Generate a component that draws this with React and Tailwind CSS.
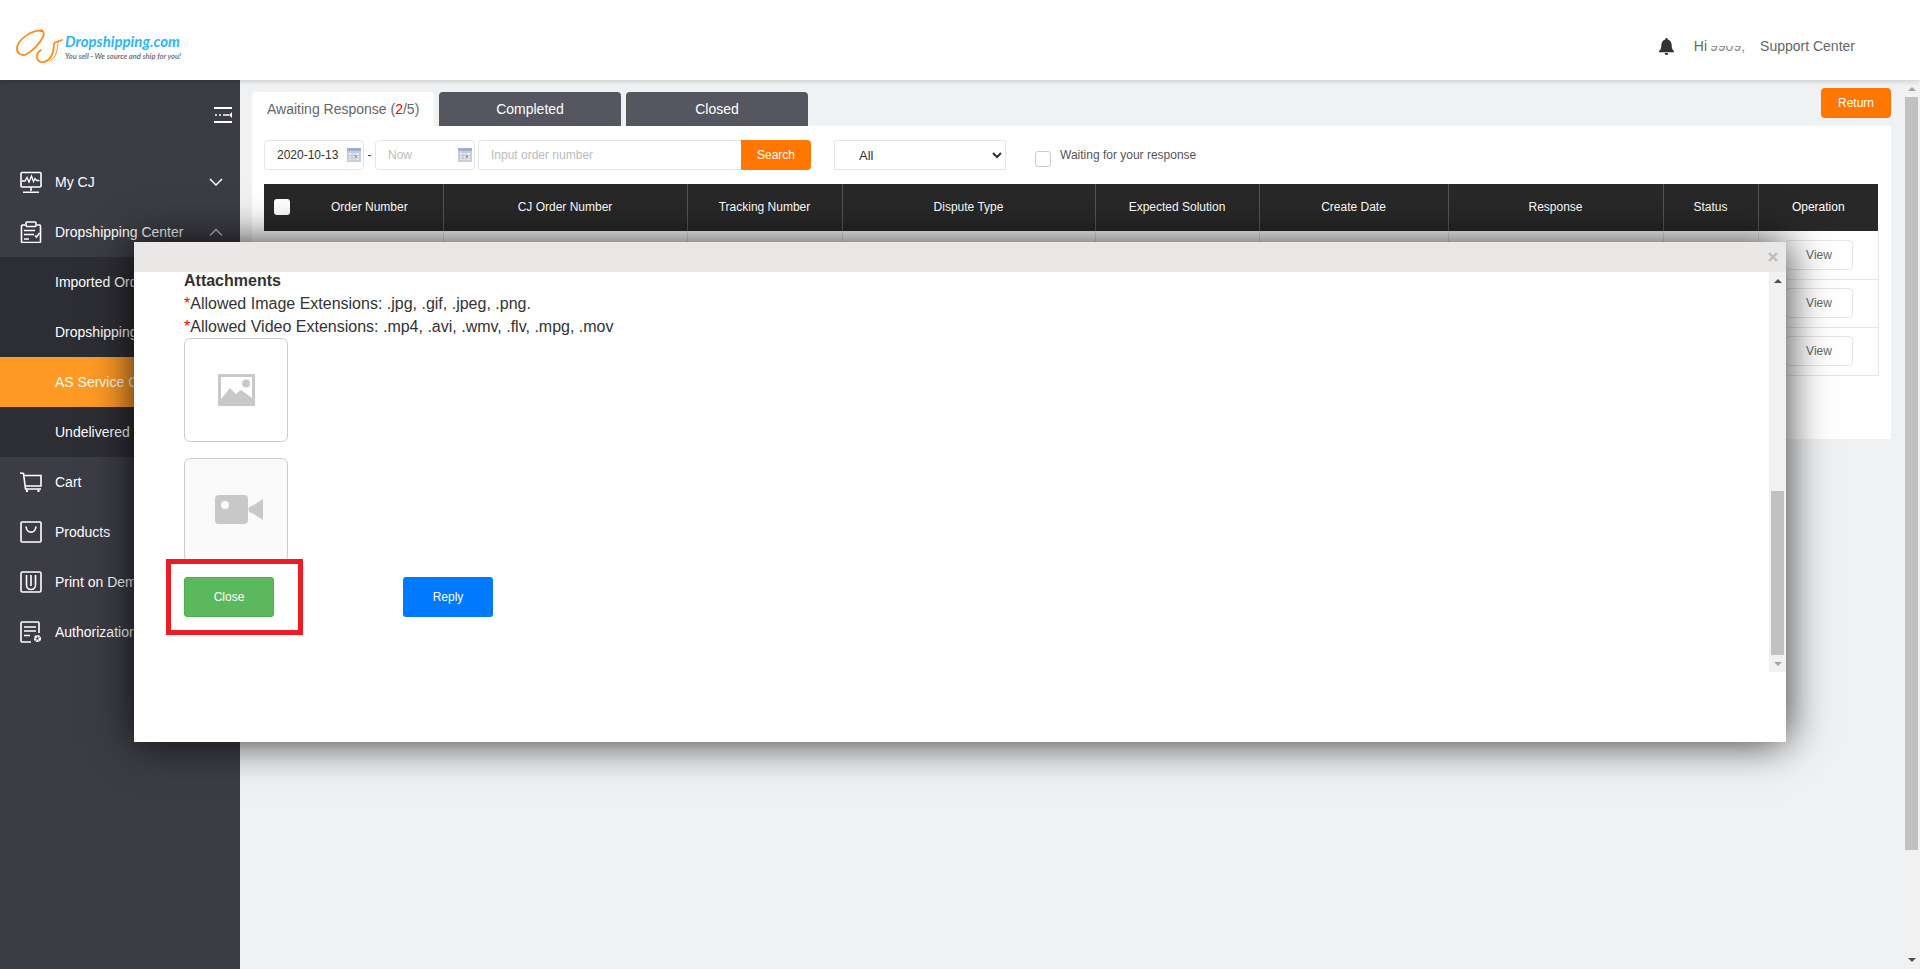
import React from "react";

const Icon = ({ children, className = "" }) => (
  <svg viewBox="0 0 22 22" fill="none" stroke="#fff" strokeWidth="1.600" className={`w-[22px] h-[22px] shrink-0 ${className}`}>
    {children}
  </svg>
);

const Chevron = ({ up }) => (
  <svg viewBox="0 0 14 8" className="w-[14px] h-2 ml-auto mr-[17px]" fill="none" stroke={up ? "#b9b9bd" : "#fff"} strokeWidth="1.500">
    <path d={up ? "M1 7.500 7 1.500l6 6" : "M1 1l6 6 6-6"} />
  </svg>
);

const MonitorI = () => (
  <Icon>
    <rect x="1" y="1.500" width="20" height="14.500" rx="1" />
    <path d="M2 10h3l2-3.500 2 4.500 2.500-6 2 5.500 1.500-3 1.500 2h3" strokeWidth="1.300" />
    <path d="M11 16v4M3 21.200h16" />
  </Icon>
);
const ClipI = () => (
  <Icon>
    <path d="M5 4H2.500a1 1 0 0 0-1 1v15.500a1 1 0 0 0 1 1h17a1 1 0 0 0 1-1V5a1 1 0 0 0-1-1H17" />
    <rect x="6" y="1" width="10" height="4.500" rx="1" />
    <path d="M4 9.500h11M4 13.500h10M4 18h5M15 14.500l1.500 1.500 3-4" />
  </Icon>
);
const CartI = () => (
  <Icon>
    <path d="M0 2l3.500.5L5.500 18H21" />
    <path d="M4 4.500h17V15H5" />
    <path d="M7 18.500v2.500M18.500 18.500v2.500" strokeWidth="2" />
  </Icon>
);
const BagI = () => (
  <Icon>
    <rect x="1" y="1" width="20" height="20" rx="1" />
    <path d="M6 5.500c1 7.500 9 7.500 10 0" />
  </Icon>
);
const PrintI = () => (
  <Icon>
    <rect x="1" y="1" width="20" height="20" rx="1.500" />
    <path d="M6.500 4v10c0 6 9 6 9 0V4M11 4v11" />
  </Icon>
);
const AuthI = () => (
  <Icon>
    <path d="M11 21H2a1 1 0 0 1-1-1V2a1 1 0 0 1 1-1h16a1 1 0 0 1 1 1v10" />
    <path d="M4 6h12M4 10h12M4 14.500h6" />
    <circle cx="17.500" cy="17.500" r="2.400" stroke="#fff" strokeWidth="2.400" strokeDasharray="2 0.500" />
  </Icon>
);

const MainItem = ({ icon, label, chevron, up }) => (
  <div className="h-[50px] flex items-center pl-5 text-white text-sm whitespace-nowrap">
    {icon}
    <span className="ml-[13px]">{label}</span>
    {chevron && <Chevron up={up} />}
  </div>
);

const SubItem = ({ label, active }) => (
  <div className={`h-[50px] flex items-center pl-[55px] text-white text-sm whitespace-nowrap ${active ? "bg-[#ff9a24]" : ""}`}>
    {label}
  </div>
);

const Calendar = () => (
  <svg viewBox="0 0 14 14" className="w-[14px] h-[14px] absolute right-[3px] top-[8px]">
    <rect x="0" y="0" width="14" height="14" fill="#c3cfe0" />
    <rect x="0" y="0" width="14" height="3" fill="#9db0cf" />
    <rect x="2" y="5" width="10" height="7" fill="#e7edf5" />
    <path d="M2 7.500h10M2 10h10M5 5v7M8 5v7" stroke="#a9b9d0" strokeWidth="0.700" />
    <rect x="8" y="7.500" width="2" height="2" fill="#d9796f" />
  </svg>
);

const Arrow = ({ down, color }) => (
  <svg viewBox="0 0 8 4" className="w-2 h-1" fill={color}>
    <path d={down ? "M0 0h8L4 4z" : "M4 0l4 4H0z"} />
  </svg>
);

const cols = [179, 244, 155, 253, 164, 189, 215, 95, 120];
const heads = ["Order Number", "CJ Order Number", "Tracking Number", "Dispute Type", "Expected Solution", "Create Date", "Response", "Status", "Operation"];

const ViewRow = () => (
  <tr className="h-12">
    {cols.map((_, i) => (
      <td key={i} className="p-0 border-b border-r border-[#e5e5e5]">
        {i === 8 && (
          <div className="flex justify-center pl-[2px]">
            <span className="w-[68px] h-[30px] flex items-center justify-center bg-white border border-[#e5e5e5] rounded text-xs text-[#666]">View</span>
          </div>
        )}
      </td>
    ))}
  </tr>
);

const Logo = () => (
  <div className="flex items-start ml-[15px] mt-[14px] relative">
    <svg viewBox="0 0 48 36" className="w-12 h-9 shrink-0" fill="none" stroke="#ff8c1a" strokeWidth="1.800" strokeLinecap="round">
      <path d="M27 2C18 0 3 10 2 19c-.5 6 5 8 9 6.500C18 22 25 14 28 8c2-5-1-8-3-6" />
      <path d="M47 11c-4 2-7 1-8 4 0 6-1 12-6 16-5 4-10 2-11-2-.5-3 1-6 4-8" />
      <path d="M43 12.500c0 8-2 16-8 19.500" strokeWidth="1" />
    </svg>
    <div className="flex flex-col ml-[2px] mt-[5px] font-['Lato',sans-serif] italic leading-none">
      <span className="text-[15px] font-bold text-[#2db5f5] whitespace-nowrap">Dropshipping.com</span>
      <span className="text-[7.500px] font-bold text-[#777] mt-[4px] whitespace-nowrap">You sell - We source and ship for you!</span>
    </div>
  </div>
);

export default function App() {
  return (
    <div className="relative h-[969px] w-full overflow-hidden flex flex-col bg-[#f0f1f3] font-['Liberation_Sans',Arial,sans-serif]">
      <header className="h-20 shrink-0 bg-white flex items-center justify-between pr-[65px] shadow-[0_1px_5px_rgba(0,0,0,0.18)] z-10">
        <Logo />
        <div className="flex items-center text-sm text-[#666] mt-[12px]">
          <svg viewBox="0 0 16 18" className="w-[15px] h-[17px] mr-[20px]" fill="#333">
            <path d="M8 0a1.300 1.300 0 0 1 1.300 1.500C12 2.200 13.500 4.500 13.500 7.500c0 3.500.8 5 2.500 6.500v1H0v-1c1.700-1.500 2.500-3 2.500-6.500C2.500 4.500 4 2.200 6.700 1.500A1.300 1.300 0 0 1 8 0zM6 16h4a2 2 0 0 1-4 0z" />
          </svg>
          <span>Hi</span>
          <span className="ml-[3px] w-[36px] [clip-path:inset(50%_0_0_0)] text-[#888]">9909,</span>
          <span className="ml-[14px]">Support Center</span>
        </div>
      </header>

      <div className="flex-1 flex min-h-0">
        <aside className="w-60 shrink-0 bg-[#3c3c45] flex flex-col">
          <div className="h-[77px] flex justify-end pt-[27px] pr-2">
            <svg viewBox="0 0 18 16" className="w-[18px] h-4" fill="none" stroke="#fff">
              <path d="M0 1h18M0 15h18" strokeWidth="1.800" />
              <path d="M1 8h2M5 8h2M9 8h6" strokeWidth="1.500" />
              <path d="M18 5v6l-3-3z" fill="#fff" stroke="none" />
            </svg>
          </div>
          <MainItem icon={<MonitorI />} label="My CJ" chevron />
          <MainItem icon={<ClipI />} label="Dropshipping Center" chevron up />
          <div className="bg-[#2d2d34]">
            <SubItem label="Imported Orders" />
            <SubItem label="Dropshipping Orders" />
            <SubItem label="AS Service Center" active />
            <SubItem label="Undelivered Orders" />
          </div>
          <MainItem icon={<CartI />} label="Cart" />
          <MainItem icon={<BagI />} label="Products" />
          <MainItem icon={<PrintI />} label="Print on Demand" />
          <MainItem icon={<AuthI />} label="Authorization" />
        </aside>

        <main className="flex-1 min-w-0 pl-3 pr-3 pt-2">
          <div className="flex items-start justify-between h-[38px]">
            <div className="flex gap-[5px] pt-1 text-sm">
              <div className="w-[182px] h-[34px] bg-white rounded-t flex items-center pl-[15px] text-[#666]">
                <span>Awaiting Response (<span className="text-[#f00]">2</span>/5)</span>
              </div>
              <div className="w-[182px] h-[34px] bg-[#555660] rounded-t flex items-center justify-center text-white">Completed</div>
              <div className="w-[182px] h-[34px] bg-[#555660] rounded-t flex items-center justify-center text-white">Closed</div>
            </div>
            <button className="w-[70px] h-[30px] bg-[#ff7700] rounded text-xs text-white">Return</button>
          </div>

          <section className="bg-white pl-3 pr-[13px] pt-[14px] h-[313px]">
            <div className="flex items-center h-[30px] text-xs">
              <div className="relative w-[100px] h-[30px]">
                <input readOnly value="2020-10-13" className="w-full h-full border border-[#e5e5e5] rounded pl-3 text-[#333] outline-none" />
                <Calendar />
              </div>
              <span className="w-[11px] text-center text-[#333]">-</span>
              <div className="relative w-[100px] h-[30px]">
                <input readOnly placeholder="Now" className="w-full h-full border border-[#e5e5e5] rounded pl-3 placeholder:text-[#bbb] outline-none" />
                <Calendar />
              </div>
              <div className="flex ml-[3px] w-[333px] h-[30px]">
                <input readOnly placeholder="Input order number" className="flex-1 min-w-0 border border-[#e5e5e5] border-r-0 rounded-l pl-3 placeholder:text-[#bbb] outline-none" />
                <button className="w-[70px] bg-[#ff7700] rounded-r text-white">Search</button>
              </div>
              <select className="ml-[23px] w-[172px] h-[30px] bg-white border border-[#e5e5e5] pl-5 text-[13px] text-[#333] outline-none">
                <option>All</option>
              </select>
              <input type="checkbox" readOnly className="appearance-none ml-[29px] mt-[7px] w-4 h-4 border border-[#ccc] rounded-[3px] bg-white" />
              <span className="ml-[9px] text-[#555]">Waiting for your response</span>
            </div>

            <table className="mt-[14px] table-fixed border-collapse w-[1614px] text-xs">
              <colgroup>
                {cols.map((w, i) => (
                  <col key={i} style={{ width: w }} />
                ))}
              </colgroup>
              <thead>
                <tr className="h-[47px] bg-[#282828] text-white">
                  {heads.map((h, i) => (
                    <th key={h} className={`p-0 pb-[2px] font-normal border-[#555] ${i < 8 ? "border-r" : ""}`}>
                      {i === 0 ? (
                        <div className="flex items-center pl-[10px]">
                          <input type="checkbox" readOnly className="appearance-none w-4 h-4 rounded-[3px] bg-white" />
                          <span className="ml-[41px]">{h}</span>
                        </div>
                      ) : (
                        h
                      )}
                    </th>
                  ))}
                </tr>
              </thead>
              <tbody>
                <ViewRow />
                <ViewRow />
                <ViewRow />
              </tbody>
            </table>
          </section>
        </main>

        <div className="w-[17px] shrink-0 bg-[#f1f1f1] flex flex-col items-center">
          <div className="h-[17px] flex items-center justify-center"><Arrow color="#a3a3a3" /></div>
          <div className="w-[13px] h-[753px] bg-[#c1c1c1]" />
          <div className="flex-1 flex items-end pb-[7px]"><Arrow down color="#505050" /></div>
        </div>
      </div>

      <div className="absolute left-[134px] top-[242px] w-[1652px] h-[500px] bg-white shadow-[0_0_40px_rgba(0,0,0,0.8)] z-20 flex flex-col">
        <div className="h-[30px] shrink-0 bg-[#e9e8e6] flex items-center justify-end pr-[7px]">
          <svg viewBox="0 0 10 10" className="w-[10px] h-[10px] mr-[1px]" stroke="#bdbdbd" strokeWidth="2.400">
            <path d="M1 1l8 8M9 1l-8 8" />
          </svg>
        </div>
        <div className="h-[400px] flex">
          <div className="relative flex-1 min-w-0 overflow-hidden pl-[50px] text-[16px] leading-[23px] text-[#333]">
            <div className="-mt-[3px] font-bold">Attachments</div>
            <div><span className="text-[#f00]">*</span>Allowed Image Extensions: .jpg, .gif, .jpeg, .png.</div>
            <div><span className="text-[#f00]">*</span>Allowed Video Extensions: .mp4, .avi, .wmv, .flv, .mpg, .mov</div>
            <div className="w-[104px] h-[104px] border border-[#ccc] rounded-md flex items-center justify-center">
              <svg viewBox="0 0 37 32" className="w-[37px] h-8">
                <path fillRule="evenodd" fill="#c8c8c8" d="M1 0h35a1 1 0 0 1 1 1v30a1 1 0 0 1-1 1H1a1 1 0 0 1-1-1V1a1 1 0 0 1 1-1zM3 3v22l9-11 6 6 5-4 11 8V3z" />
                <circle cx="28" cy="9.500" r="4" fill="#c8c8c8" />
              </svg>
            </div>
            <div className="mt-4 w-[104px] h-[104px] border border-[#ccc] rounded-md bg-[#fafafa] flex items-center justify-center">
              <svg viewBox="0 0 48 29" className="w-12 h-[29px] -mt-[2px] ml-[6px]">
                <path fillRule="evenodd" fill="#c8c8c8" d="M4 0h25a4 4 0 0 1 4 4v21a4 4 0 0 1-4 4H4a4 4 0 0 1-4-4V4a4 4 0 0 1 4-4zM10 6a4 4 0 1 0 0 8 4 4 0 0 0 0-8z" />
                <path fill="#c8c8c8" d="M37 11l11-7v21l-11-7a1 1 0 0 1 0-7z" />
              </svg>
            </div>
            <div className="mt-[15px] flex gap-[129px] text-xs leading-none">
              <button className="w-[90px] h-10 bg-[#5cb85c] border border-[#4cae4c] rounded-[3px] text-white">Close</button>
              <button className="w-[90px] h-10 bg-[#007bff] rounded-[3px] text-white">Reply</button>
            </div>
            <div className="absolute left-[32px] top-[287px] w-[137px] h-[76px] border-[5px] border-[#ed1c24]" />
          </div>
          <div className="w-[17px] shrink-0 bg-[#f1f1f1] flex flex-col items-center">
            <div className="h-[17px] flex items-center justify-center"><Arrow color="#505050" /></div>
            <div className="flex-1" />
            <div className="w-[13px] h-[164px] bg-[#c1c1c1]" />
            <div className="h-[17px] flex items-center justify-center"><Arrow down color="#a3a3a3" /></div>
          </div>
        </div>
      </div>
    </div>
  );
}
